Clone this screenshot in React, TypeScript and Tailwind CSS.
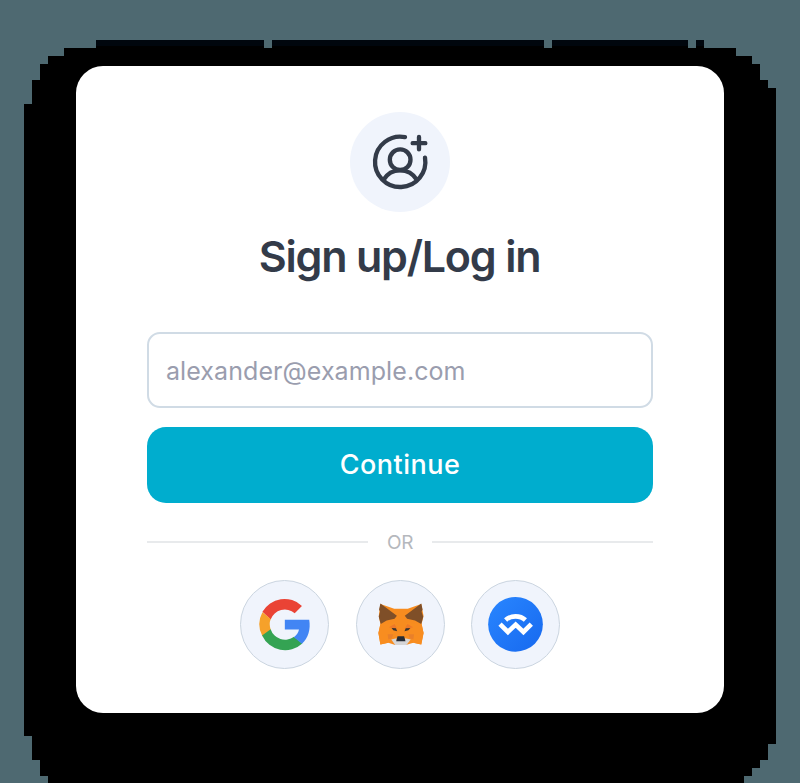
import React from "react";

function Backdrop() {
  return (
    <svg className="absolute inset-0 h-[783px] w-[800px]" viewBox="0 0 800 783" shapeRendering="crispEdges" aria-hidden="true">
      <path
        fill="#000"
        d="M96 40H264V48H272V40H544V48H552V40H688V48H696V40H704V48H736V56H752V64H760V80H768V88H776V744H768V760H760V768H752V776H744V783H48V776H40V760H32V736H24V104H32V80H40V64H48V56H64V48H96Z"
      />
      <path fill="#00060d" d="M96 40H264V46H96ZM272 40H544V46H272ZM552 40H688V46H552ZM696 40H704V46H696Z" />
    </svg>
  );
}

function UserPlusIcon() {
  return (
    <svg className="h-[100px] w-[100px]" viewBox="30 21 300 300" fill="none" stroke="#333b49" strokeWidth="13" strokeLinecap="round" strokeLinejoin="round">
      <path d="M195 96.500A75.500 75.500 0 1 0 255 158" />
      <circle cx="180.500" cy="164" r="31" />
      <path d="M131 224C143 204 160 196 180 196S218 204 230 224" />
      <path d="M237 96V133M218 114.500H256" />
    </svg>
  );
}

function GoogleIcon() {
  return (
    <svg className="h-[88px] w-[88px]" viewBox="17 17 264 264">
      <path fill="#ea4335" d="M82 109A77 77 0 0 1 202 91L180 113A46 46 0 0 0 107 132Z" />
      <path fill="#f6a12a" d="M82 110A77 77 0 0 0 82 183L107.500 164A46 46 0 0 1 107 131Z" />
      <path fill="#34a353" d="M81 181A77 77 0 0 0 203 205L178 185A46 46 0 0 1 107 162Z" />
      <path fill="#4285f4" d="M150 133H224C229 162 221 189 202 206L177.500 186C186 180 191 172 193 163H150Z" />
    </svg>
  );
}

function FoxIcon() {
  return (
    <svg className="h-[88px] w-[88px]" viewBox="20 18 264 264">
      <path fill="#f78c1f" d="M91 86L133 101H174L215 86L222 123L216 147L222 174L215 209L191 204L168 211H136L115 204L91 209L85 174L91 147L86 123Z" />
      <path fill="#f88d20" d="M91 147L139 143L132 177L115 204L91 209L85 174ZM216 147L167 143L175 177L191 204L215 209L222 174Z" />
      <path fill="#e9802a" d="M113 178H130L126 190L115 194ZM193 178H176L180 190L191 194Z" />
      <path fill="#7f4f28" d="M91 85L141 122L134 131L110 136L92 147L86 125L90 110L87 103ZM215 85L165 122L172 131L196 136L215 147L221 125L216 110L219 103Z" />
      <path fill="#ed7928" d="M117 157L134 147L142 163ZM190 157L173 147L164 163Z" />
      <path fill="#3c3430" d="M125 159L138 160L142 169L130 166ZM182 159L168 160L164 169L176 166Z" />
      <path fill="#d5d5d7" d="M124 194L140 190V198H166V190L183 194L170 211H136Z" />
      <path fill="#252b34" d="M143 184H163L167 199H139Z" />
    </svg>
  );
}

function WalletConnectIcon() {
  return (
    <svg className="h-[88px] w-[88px]" viewBox="20 18 264 264" fill="none">
      <defs>
        <linearGradient id="wc" x1="0" x2="1" y1="0" y2="1">
          <stop stopColor="#2986ff" />
          <stop offset="1" stopColor="#1769ef" />
        </linearGradient>
      </defs>
      <circle cx="152" cy="148" r="83" fill="url(#wc)" />
      <path d="M122 135C138 120 166 120 182 135" stroke="#fff" strokeWidth="14" />
      <path d="M105 147L129 171L152.500 149L176 171L200 147" stroke="#fff" strokeWidth="14" strokeLinejoin="miter" />
    </svg>
  );
}

function SocialButton({ label, children }: { label: string; children: React.ReactNode }) {
  return (
    <button aria-label={label} className="flex h-[89px] w-[89px] items-center justify-center rounded-full border border-[#cbd5e0] bg-[#f0f4fc]">
      {children}
    </button>
  );
}

export default function App() {
  return (
    <main className="relative h-[783px] w-[800px] overflow-hidden bg-[#4e6971] pt-[66px] font-['Inter',sans-serif]">
      <Backdrop />
      <section className="relative mx-auto flex h-[647px] w-[648px] flex-col items-center rounded-[27px] bg-white px-[71px] pt-[46px]">
        <div className="h-[100px] w-[100px] shrink-0 rounded-full bg-[#f0f4fc]">
          <UserPlusIcon />
        </div>
        <h1 className="mt-[17px] mr-px h-[54px] whitespace-nowrap text-[43px] leading-[54px] font-semibold tracking-[-1.2px] text-[#333b49]">Sign up/Log in</h1>
        <input
          placeholder="alexander@example.com"
          className="mt-[49px] h-[76px] w-[506px] shrink-0 rounded-[13px] border-2 border-[#d0dbe5] bg-white px-[17px] pt-[2px] text-[25px] tracking-[0.08px] outline-none placeholder:text-[#9a9dae]"
        />
        <button className="mt-[19px] h-[76px] w-[506px] shrink-0 rounded-[19px] bg-[#00adce] text-[27px] font-medium tracking-[0.5px] text-white">Continue</button>
        <div className="mt-[26px] flex h-[26px] w-[506px] items-center justify-between">
          <span className="h-[2px] w-[221px] bg-[#e8eaec]" />
          <span className="pt-[2px] text-[19px] leading-[26px] tracking-[-0.5px] text-[#b5b8bd]">OR</span>
          <span className="h-[2px] w-[221px] bg-[#e8eaec]" />
        </div>
        <div className="mt-[25px] flex gap-[26.5px]">
          <SocialButton label="Google"><GoogleIcon /></SocialButton>
          <SocialButton label="MetaMask"><FoxIcon /></SocialButton>
          <SocialButton label="WalletConnect"><WalletConnectIcon /></SocialButton>
        </div>
      </section>
    </main>
  );
}
